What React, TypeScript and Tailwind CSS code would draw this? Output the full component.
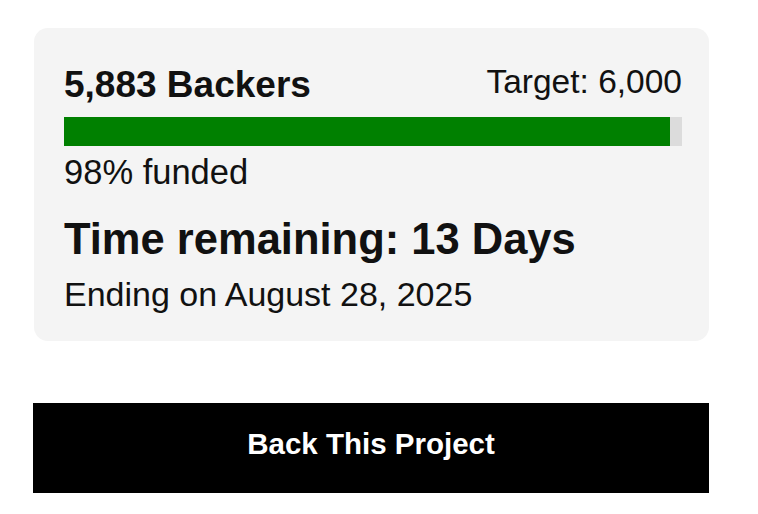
const backers = 5883;
const target = 6000;

const App = () => {
  const pct = Math.round((backers / target) * 100);

  return (
    <div className="w-[758px] h-[514px] bg-white pt-[28px] pl-[34px] font-['Liberation_Sans',Arial,sans-serif] text-[#111]">
      <div className="w-[675px] rounded-[14px] bg-[#f4f4f4] pl-[30px] pr-[27px] pt-[34px] pb-[27px]">
        <div className="flex items-start justify-between">
          <h2 className="mt-[3px] text-[37px] leading-[40px] font-bold">5,883 Backers</h2>
          <span className="text-[33.5px] leading-[40px]">Target: 6,000</span>
        </div>
        <div className="mt-[12px] h-[29px] w-full bg-[#dcdcdc]">
          <div className="h-full bg-[#008000]" style={{ width: `${pct}%` }} />
        </div>
        <p className="mt-[6px] text-[34.5px] leading-[40px]">{pct}% funded</p>
        <h3 className="mt-[22px] text-[43.5px] leading-[50px] font-bold">Time remaining: 13 Days</h3>
        <p className="mt-[10px] text-[34px] leading-[40px]">Ending on August 28, 2025</p>
      </div>
      <button className="mt-[62px] -ml-px flex h-[90px] w-[676px] items-center justify-center bg-black pb-[8px] text-[29.5px] font-bold text-white">
        Back This Project
      </button>
    </div>
  );
};

export default App;
